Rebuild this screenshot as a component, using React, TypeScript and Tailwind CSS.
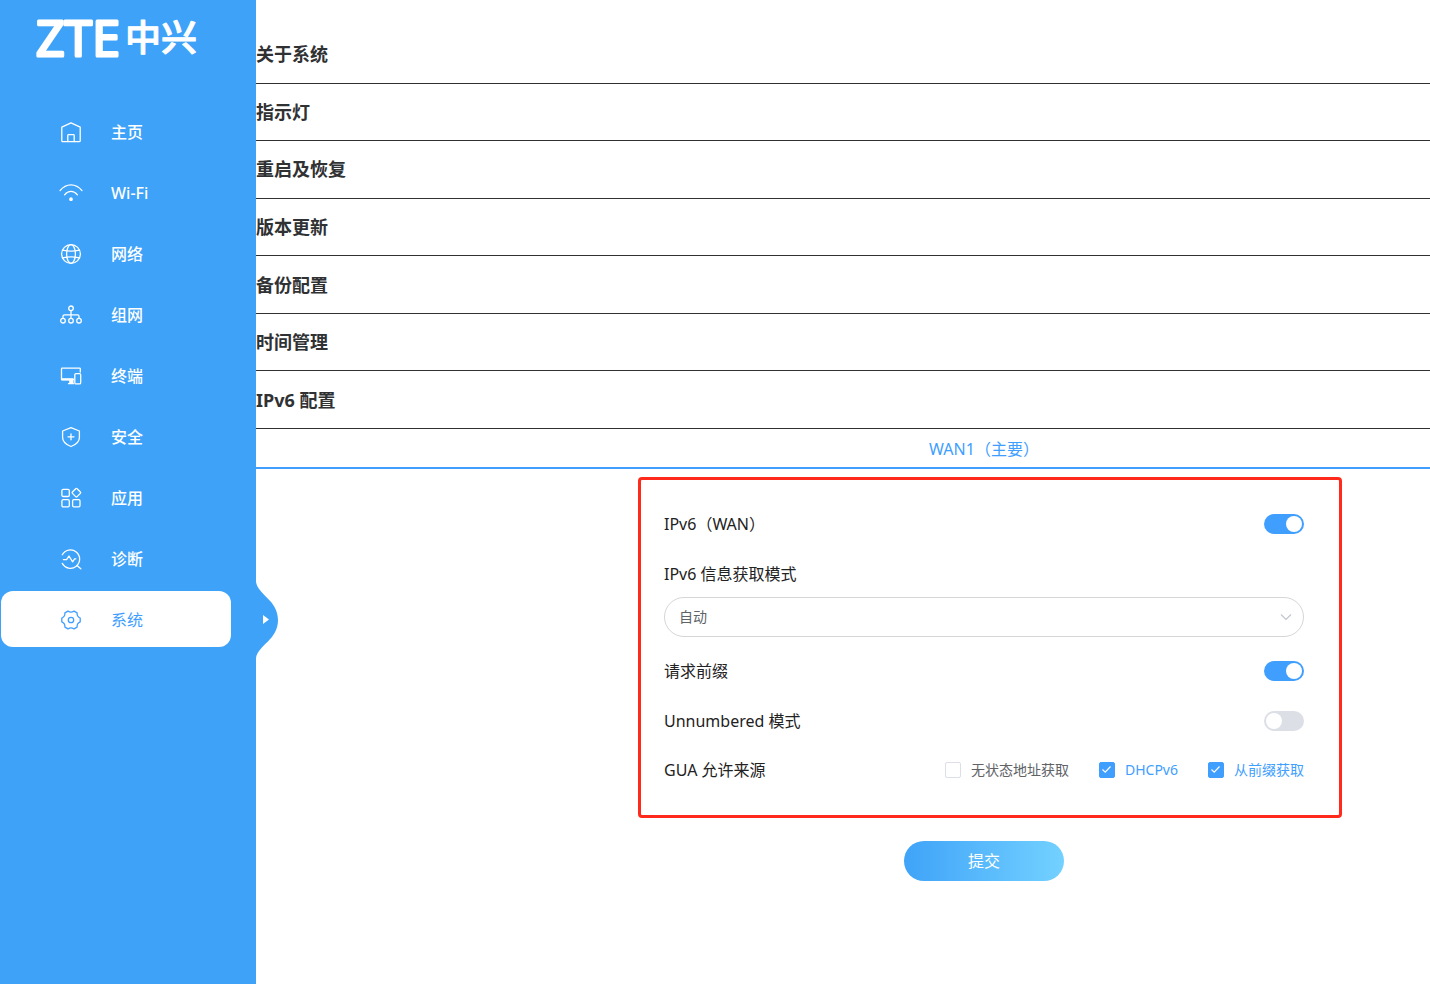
import React, { useState } from "react";
import clsx from "clsx";

const icon = {
  home: (
    <>
      <path d="M1.8 6.200 11 1.800l9.200 4.400v13.600a.9.9 0 0 1-.9.9H2.700a.9.9 0 0 1-.9-.9z" />
      <path d="M7.800 20.500v-6a.8.8 0 0 1 .8-.8h4.800a.8.8 0 0 1 .8.8v6" />
    </>
  ),
  wifi: (
    <>
      <path d="M0 8.600C6.200.9 15.800.9 22 8.600" />
      <path d="M4.600 12.800c3.600-4.500 9.200-4.500 12.800 0" />
      <circle cx="11" cy="17.200" r="1.200" fill="currentColor" />
    </>
  ),
  globe: (
    <>
      <circle cx="11" cy="11" r="9.400" />
      <ellipse cx="11" cy="11" rx="4.400" ry="9.400" />
      <path d="M2.600 7.200c5.200 1.200 11.600 1.200 16.800 0M2.600 14.800c5.200-1.200 11.600-1.200 16.800 0" />
    </>
  ),
  mesh: (
    <>
      <circle cx="11" cy="4.300" r="2.300" />
      <circle cx="3" cy="16.700" r="2.300" />
      <circle cx="11" cy="16.700" r="2.300" />
      <circle cx="19" cy="16.700" r="2.300" />
      <path d="M11 6.600v7.800M3 14.400v-2.100a1.500 1.500 0 0 1 1.500-1.500h13a1.500 1.500 0 0 1 1.500 1.500v2.100" />
    </>
  ),
  devices: (
    <>
      <path d="M20.300 7V3.800a.7.7 0 0 0-.7-.7H2.200a.7.7 0 0 0-.7.7v10.700h12" />
      <path d="M1.500 13.200h12v2.300h-12zM9.200 15.500h4.300v3H9.200z" fill="currentColor" stroke="none" />
      <path d="M8.500 18.700h5" />
      <rect x="14.800" y="8.600" width="5.900" height="10.300" rx="1.200" />
    </>
  ),
  shield: (
    <>
      <path d="M11 1.600 19.400 5v6.500c0 4.200-3.800 7.300-8.400 9-4.600-1.700-8.400-4.800-8.400-9V5z" />
      <path d="M11 7.800v6M8 10.800h6" />
    </>
  ),
  apps: (
    <>
      <rect x="1.900" y="2.300" width="7.400" height="7.200" rx="1.300" />
      <rect x="1.900" y="12.700" width="7.400" height="7.200" rx="1.300" />
      <rect x="12.600" y="12.700" width="7.400" height="7.200" rx="1.300" />
      <rect x="13.100" y="2.400" width="6.600" height="6.600" rx="1" transform="rotate(45 16.400 5.700)" />
    </>
  ),
  diagnose: (
    <>
      <path d="M2.300 6.800a9.200 9.200 0 1 1 0 8.600" />
      <path d="m17 17.500 3.800 3.300" />
      <path d="M3.400 11.600h3.200L9 8l3.600 5.800 2-3h1.200" />
    </>
  ),
  gear: (
    <>
      <path d="M8 2.100c1.900 1.400 4.100 1.400 6 0l3.100 1.800c-.2 2.300.9 4.200 3.100 5.200v3.800c-2.200 1-3.300 2.900-3.100 5.200L14 19.900c-1.900-1.400-4.100-1.400-6 0l-3.100-1.800c.2-2.300-.9-4.200-3.100-5.200V9.100c2.200-1 3.300-2.900 3.100-5.200z" />
      <circle cx="11" cy="11" r="2.700" />
    </>
  ),
};

const menu: { label: string; icon: keyof typeof icon }[] = [
  { label: "主页", icon: "home" },
  { label: "Wi-Fi", icon: "wifi" },
  { label: "网络", icon: "globe" },
  { label: "组网", icon: "mesh" },
  { label: "终端", icon: "devices" },
  { label: "安全", icon: "shield" },
  { label: "应用", icon: "apps" },
  { label: "诊断", icon: "diagnose" },
  { label: "系统", icon: "gear" },
];

const sections = ["关于系统", "指示灯", "重启及恢复", "版本更新", "备份配置", "时间管理", "IPv6 配置"];

// round joins soften the letter corners
function Logo() {
  return (
    <svg className="ml-9 h-[76px] w-[166px]" viewBox="0 0 166 76" fill="#fff" stroke="#fff" strokeLinejoin="round">
      <text x="0" y="56" strokeWidth="3" className="font-['Open_Sans'] text-[50px] font-normal">ZTE</text>
      <text x="89" y="51" strokeWidth="1" className="text-[36px] font-medium">中兴</text>
    </svg>
  );
}

function Sidebar() {
  const [active, setActive] = useState("系统");
  return (
    <aside className="relative w-64 shrink-0 bg-[#3da2f8]">
      <Logo />
      <nav className="mt-[27px] flex flex-col gap-[5px] pl-px pr-[25px]">
        {menu.map(m => (
          <a
            key={m.label}
            href="#"
            onClick={() => setActive(m.label)}
            className={clsx(
              "flex h-14 items-center gap-[29px] rounded-xl pl-[59px] pt-0.5 text-base",
              active === m.label ? "bg-white text-[#409eff]" : "font-medium text-white",
            )}
          >
            <svg className="size-[22px] overflow-visible" viewBox="0 0 22 22" fill="none" stroke="currentColor" strokeWidth="1.300" strokeLinecap="round" strokeLinejoin="round">
              {icon[m.icon]}
            </svg>
            {m.label}
          </a>
        ))}
      </nav>
      {/* collapse handle */}
      <button type="button" aria-label="收起菜单" className="absolute left-full top-[582px] z-10">
        <svg className="h-[76px] w-[23px]" viewBox="0 0 23 76">
          <path d="M-1 0H0C2 13 22 18 22 38S2 63 0 76H-1z" fill="#3da2f8" />
          <path d="M7 33l6 4.500-6 4.500z" fill="#fff" />
        </svg>
      </button>
    </aside>
  );
}

function SwitchRow({ label, defaultChecked }: { label: string; defaultChecked?: boolean }) {
  return (
    <label className="flex h-[50px] items-center justify-between">
      {label}
      <input
        type="checkbox"
        role="switch"
        defaultChecked={defaultChecked}
        className="flex h-5 w-10 appearance-none items-center rounded-full bg-[#dcdfe6] px-0.5 before:size-4 before:rounded-full before:bg-white checked:justify-end checked:bg-[#409eff]"
      />
    </label>
  );
}

function Check({ label, defaultChecked }: { label: string; defaultChecked?: boolean }) {
  return (
    <label className="flex items-center gap-2.5 text-sm text-[#606266] has-checked:text-[#409eff]">
      <span className="grid size-4 place-items-center">
        <input
          type="checkbox"
          defaultChecked={defaultChecked}
          className="col-start-1 row-start-1 size-4 appearance-none rounded-xs border border-[#dcdfe6] bg-white checked:border-[#409eff] checked:bg-[#409eff]"
        />
        <svg className="pointer-events-none col-start-1 row-start-1 size-4" viewBox="0 0 16 16" fill="none" stroke="#fff" strokeWidth="1.200">
          <path d="m3.500 7.500 2.700 2.700 5.300-5.700" />
        </svg>
      </span>
      {label}
    </label>
  );
}

function Ipv6Form() {
  return (
    <form className="relative w-[640px] pt-[30px] text-base text-[#222]" onSubmit={e => e.preventDefault()}>
      <SwitchRow label="IPv6（WAN）" defaultChecked />
      <label htmlFor="mode" className="flex h-12 items-center pt-0.5">IPv6 信息获取模式</label>
      <div className="grid items-center">
        <select id="mode" className="col-start-1 row-start-1 h-10 appearance-none rounded-full border border-[#d5d6d8] bg-white px-3.5 text-sm text-[#606266]">
          <option>自动</option>
        </select>
        <svg className="pointer-events-none col-start-1 row-start-1 mr-3 h-2 w-3 justify-self-end" viewBox="0 0 12 8" fill="none" stroke="#c0c4cc" strokeWidth="1.100">
          <path d="m1 1.500 5 5 5-5" />
        </svg>
      </div>
      <div className="mt-[9px]">
        <SwitchRow label="请求前缀" defaultChecked />
        <SwitchRow label="Unnumbered 模式" />
        <fieldset className="flex h-12 items-center">
          <legend className="float-left mr-auto">GUA 允许来源</legend>
          <div className="flex gap-[30px]">
            <Check label="无状态地址获取" />
            <Check label="DHCPv6" defaultChecked />
            <Check label="从前缀获取" defaultChecked />
          </div>
        </fieldset>
      </div>
      <div className="mt-[47px] flex justify-center">
        <button type="submit" className="h-10 w-40 rounded-full bg-linear-to-r from-[#3fa3f8] to-[#73d1ff] text-white">提交</button>
      </div>
      {/* highlight frame */}
      <div className="pointer-events-none absolute -left-[26px] -right-[38px] bottom-[63px] top-2 rounded-sm border-3 border-[#ff2a1c]" />
    </form>
  );
}

export default function App() {
  return (
    <div className="flex min-h-screen bg-white font-['Noto_Sans','Noto_Sans_CJK_SC',sans-serif]">
      <Sidebar />
      <main className="min-w-0 flex-1 pt-[26px]">
        <div className="grid h-[403px] grid-rows-7">
          {sections.map(s => (
            <h3 key={s} className="flex border-b border-[#303133] text-lg font-bold text-[#303133]">
              <button type="button" className="flex-1 text-left">{s}</button>
            </h3>
          ))}
        </div>
        <div className="flex h-10 border-b-2 border-[#409eff]">
          <button type="button" className="flex-1 pl-[282px] pt-0.5 text-base text-[#409eff]">WAN1（主要）</button>
        </div>
        <div className="flex justify-center pl-[282px]">
          <Ipv6Form />
        </div>
      </main>
    </div>
  );
}
